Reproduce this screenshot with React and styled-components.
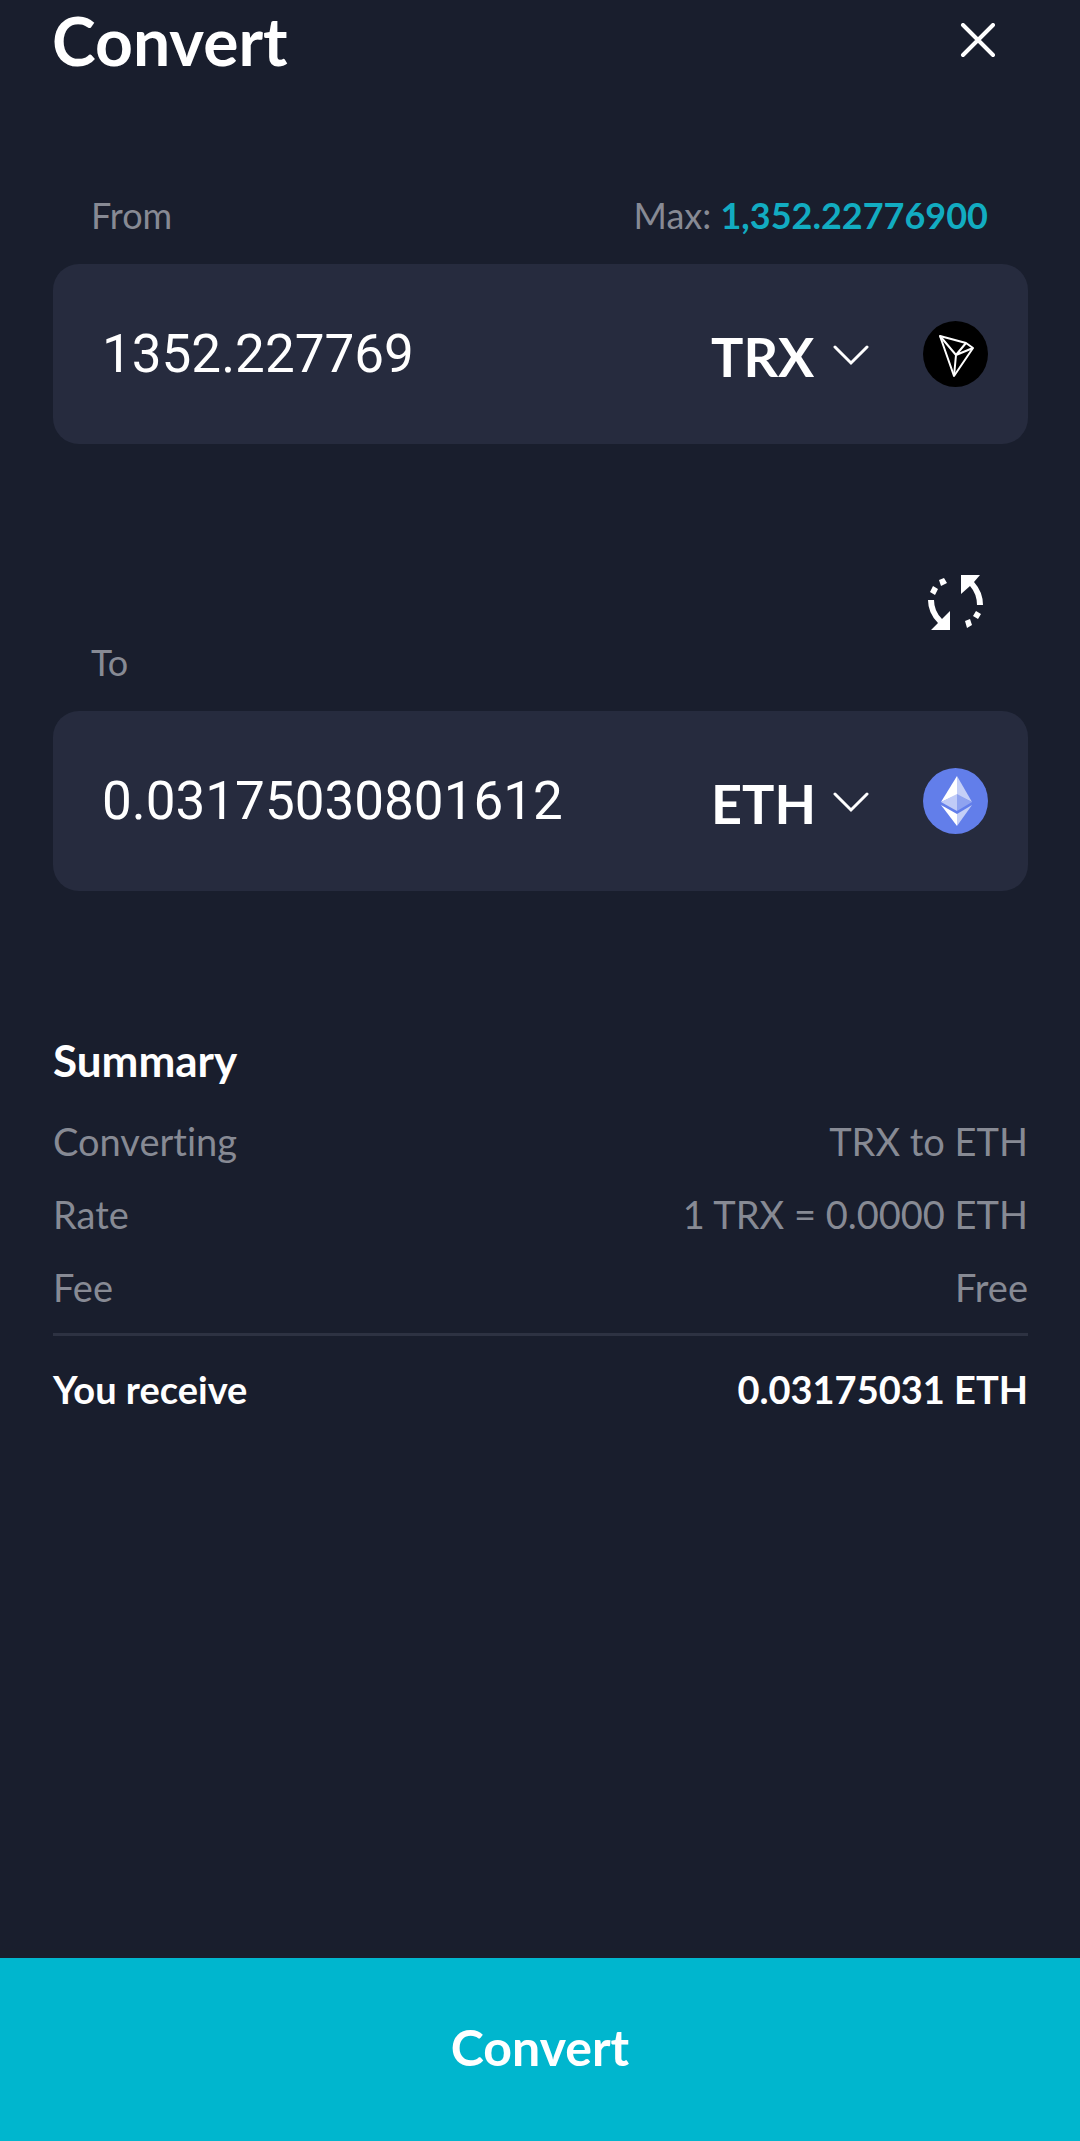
import React, { useState } from 'react'
import styled, { createGlobalStyle } from 'styled-components'

const GlobalStyle = createGlobalStyle`
  * {
    box-sizing: border-box;
  }

  body {
    margin: 0;
    background: #191e2d;
    color: #fff;
    font-family: Lato, sans-serif;
    font-variant-ligatures: none;
  }

  button,
  input,
  select {
    margin: 0;
    padding: 0;
    border: 0;
    background: none;
    color: inherit;
    font: inherit;
  }

  button,
  select {
    cursor: pointer;
  }
`

const Page = styled.form`
  display: flex;
  flex-direction: column;
  min-height: 100vh;
`

const Header = styled.header`
  display: flex;
  align-items: center;
  justify-content: space-between;
  height: 82px;
  padding: 0 84px 0 52px;
`

const Title = styled.h1`
  margin: 0;
  font-size: 66px;
  line-height: 80px;
  font-weight: 700;
`

const IconButton = styled.button`
  display: flex;
  align-items: center;
  justify-content: center;
`

const Content = styled.main`
  display: flex;
  flex-direction: column;
  padding: 109px 52px 48px 53px;
`

const Labels = styled.div`
  display: flex;
  justify-content: space-between;
  margin-bottom: 25px;
  padding: 0 40px 0 38px;
  color: #878a94;
  font-size: 36px;
  line-height: 48px;
`

const MaxButton = styled.button`
  color: #12acc1;
  font-weight: 700;
`

const Card = styled.div`
  display: flex;
  align-items: center;
  height: 180px;
  padding: 0 40px 0 49px;
  border-radius: 26px;
  background: #262b3e;
`

const Amount = styled.input`
  flex: 1;
  min-width: 0;
  height: 80px;
  font-family: Roboto, sans-serif;
  font-size: 53px;
  outline: none;
`

const Picker = styled.div`
  display: flex;
  align-items: center;
  margin-right: 54px;
  padding-top: 4px;
`

const Currency = styled.select`
  width: 122px;
  height: 80px;
  appearance: none;
  outline: none;
  font-size: 54px;
  font-weight: 700;

  option {
    background: #262b3e;
  }
`

const SwapRow = styled.div`
  display: flex;
  justify-content: flex-end;
  padding: 126px 40px 4px 0;
`

const SummaryTitle = styled.h2`
  margin: 141px 0 17px;
  font-size: 44px;
  line-height: 56px;
  font-weight: 700;
`

const Summary = styled.dl`
  margin: 0;
`

const Line = styled.div`
  display: flex;
  justify-content: space-between;
  font-size: 38px;
  line-height: 73px;
  color: ${props => (props.$total ? '#fff' : '#878a94')};
  font-weight: ${props => (props.$total ? 700 : 400)};

  dd {
    margin: 0;
  }
`

const Divider = styled.hr`
  width: 100%;
  height: 3px;
  margin: 9px 0 17px;
  border: 0;
  background: #2d3242;
`

const Submit = styled.button`
  height: 183px;
  margin-top: auto;
  padding-bottom: 6px;
  background: #00b6ce;
  font-size: 50px;
  font-weight: 700;
`

const CloseIcon = () => (
  <svg width="36" height="36" viewBox="0 0 36 36" stroke="#fff" strokeWidth="4" strokeLinecap="round">
    <path d="M3 2 33 32M33 2 3 32" />
  </svg>
)

const ChevronIcon = () => (
  <svg width="36" height="22" viewBox="0 0 36 22" fill="none" stroke="#fff" strokeWidth="3">
    <path d="M2 2 18 18 34 2" strokeLinecap="round" />
  </svg>
)

const SwapIcon = () => (
  <svg width="64" height="64" viewBox="0 0 64 64" fill="#fff">
    <path d="M37 5H56L50 12Q59 22 59 35H53Q53 24 46 16L37 24Z" />
    <path d="M26 60H7L14 53Q4 43 4 30H10Q10 41 18 49L26 41Z" />
    <path d="M15 10 20 8 23 13 17 16ZM9 16 14 19 11 25 6 22Z" />
    <path d="M52 41 57 44 54 49 49 46ZM41 51 46 49 48 55 43 58Z" />
  </svg>
)

const TrxIcon = () => (
  <svg width="65" height="66" viewBox="0 0 65 66">
    <ellipse cx="32.5" cy="33" rx="32.5" ry="33" fill="#000" />
    <g fill="none" stroke="#fff" strokeWidth="2" strokeLinejoin="round">
      <path d="M17 15 43 22 50 27 31 55Z" />
      <path d="M17 15 33 34 50 27M33 34 43 22M33 34 31 55" />
    </g>
  </svg>
)

const EthIcon = () => (
  <svg width="65" height="66" viewBox="0 0 65 66">
    <ellipse cx="32.5" cy="33" rx="32.5" ry="33" fill="#627eea" />
    <path d="M34 8 18 34 34 27Z" fill="#fff" />
    <path d="M34 8 49 34 34 27Z" fill="#c4cff7" />
    <path d="M34 26 18 34 34 43Z" fill="#c0cbf7" />
    <path d="M34 26 49 34 34 43Z" fill="#8fa3f0" />
    <path d="M18 37 34 46V58Z" fill="#fff" />
    <path d="M49 37 34 46V58Z" fill="#c4cff7" />
  </svg>
)

const icons = { TRX: TrxIcon, ETH: EthIcon }

function CurrencyCard({ id, amount, onAmount, currency, onCurrency }) {
  const CoinIcon = icons[currency]
  return (
    <Card>
      <Amount id={id} inputMode="decimal" value={amount} onChange={e => onAmount(e.target.value)} />
      <Picker>
        <Currency
          aria-label={`${id} currency`}
          value={currency}
          onChange={e => onCurrency(e.target.value)}
        >
          <option>TRX</option>
          <option>ETH</option>
        </Currency>
        <ChevronIcon />
      </Picker>
      <CoinIcon />
    </Card>
  )
}

export default function App() {
  const [from, setFrom] = useState({ amount: '1352.227769', currency: 'TRX' })
  const [to, setTo] = useState({ amount: '0.03175030801612', currency: 'ETH' })

  const swap = () => {
    setFrom(to)
    setTo(from)
  }

  return (
    <Page onSubmit={e => e.preventDefault()}>
      <GlobalStyle />
      <Header>
        <Title>Convert</Title>
        <IconButton type="button" aria-label="Close">
          <CloseIcon />
        </IconButton>
      </Header>
      <Content>
        <Labels>
          <label htmlFor="from">From</label>
          <span>
            Max:{' '}
            <MaxButton type="button" onClick={() => setFrom({ ...from, amount: '1352.227769' })}>
              1,352.22776900
            </MaxButton>
          </span>
        </Labels>
        <CurrencyCard
          id="from"
          amount={from.amount}
          onAmount={amount => setFrom({ ...from, amount })}
          currency={from.currency}
          onCurrency={currency => setFrom({ ...from, currency })}
        />
        <SwapRow>
          <IconButton type="button" aria-label="Swap currencies" onClick={swap}>
            <SwapIcon />
          </IconButton>
        </SwapRow>
        <Labels>
          <label htmlFor="to">To</label>
        </Labels>
        <CurrencyCard
          id="to"
          amount={to.amount}
          onAmount={amount => setTo({ ...to, amount })}
          currency={to.currency}
          onCurrency={currency => setTo({ ...to, currency })}
        />
        <SummaryTitle>Summary</SummaryTitle>
        <Summary>
          <Line>
            <dt>Converting</dt>
            <dd>
              {from.currency} to {to.currency}
            </dd>
          </Line>
          <Line>
            <dt>Rate</dt>
            <dd>
              1 {from.currency} = 0.0000 {to.currency}
            </dd>
          </Line>
          <Line>
            <dt>Fee</dt>
            <dd>Free</dd>
          </Line>
        </Summary>
        <Divider />
        <Summary>
          <Line $total>
            <dt>You receive</dt>
            <dd>0.03175031 {to.currency}</dd>
          </Line>
        </Summary>
      </Content>
      <Submit type="submit">Convert</Submit>
    </Page>
  )
}
